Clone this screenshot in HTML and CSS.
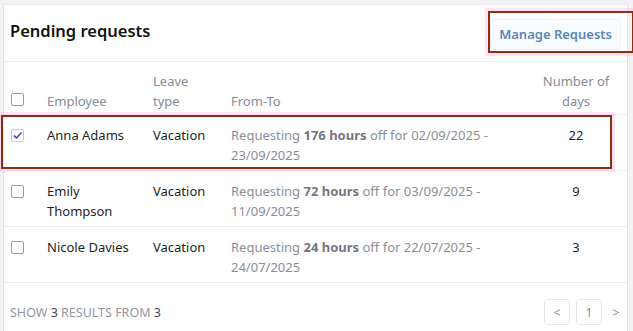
FILE: index.html
```html
<!DOCTYPE html>
<html>
<head>
<meta charset="utf-8">
<link rel="stylesheet" href="styles.css">
</head>
<body>
<div class="card">
  <div class="card-head">
    <h2 class="title">Pending requests</h2>
    <button class="btn-manage">Manage Requests</button>
  </div>
  <table class="req-table">
    <colgroup>
      <col class="c-check"><col class="c-emp"><col class="c-type"><col class="c-range"><col class="c-days">
    </colgroup>
    <thead>
      <tr>
        <th><span class="cb"></span></th>
        <th>Employee</th>
        <th>Leave<br>type</th>
        <th>From-To</th>
        <th class="center">Number of<br>days</th>
      </tr>
    </thead>
    <tbody>
      <tr>
        <td><span class="cb checked"><svg viewBox="0 0 12 12" width="11" height="11"><path d="M2.5 6.5 L5 8.8 L9.8 3.2" fill="none" stroke="#5a4cc2" stroke-width="1.8" stroke-linecap="round" stroke-linejoin="round"/></svg></span></td>
        <td>Anna Adams</td>
        <td>Vacation</td>
        <td class="muted">Requesting <b>176 hours</b> off for 02/09/2025 - 23/09/2025</td>
        <td class="center">22</td>
      </tr>
      <tr>
        <td><span class="cb"></span></td>
        <td>Emily Thompson</td>
        <td>Vacation</td>
        <td class="muted">Requesting <b>72 hours</b> off for 03/09/2025 - 11/09/2025</td>
        <td class="center">9</td>
      </tr>
      <tr>
        <td><span class="cb"></span></td>
        <td>Nicole Davies</td>
        <td>Vacation</td>
        <td class="muted">Requesting <b>24 hours</b> off for 22/07/2025 - 24/07/2025</td>
        <td class="center">3</td>
      </tr>
    </tbody>
  </table>
  <div class="card-foot">
    <div class="summary">SHOW <b>3</b> RESULTS FROM <b>3</b></div>
    <div class="pager">
      <span class="pg pg-box">&lt;</span>
      <span class="pg pg-box">1</span>
      <span class="pg">&gt;</span>
    </div>
  </div>
  <div class="mark mark-btn"></div>
  <div class="mark mark-row"></div>
</div>
</body>
</html>
```
FILE: styles.css
```css
* { box-sizing: border-box; }
html, body { margin: 0; }
body {
  background: #f3f3f6;
  padding: 4px 5px 0 3px;
  font-family: "Noto Sans", "Open Sans", sans-serif;
  font-size: 13px;
  color: #1f1f24;
  height: 331px;
  overflow: hidden;
}
.card {
  position: relative;
  background: #fff;
  border-left: 1px solid #e4e4ea;
  border-right: 1px solid #e4e4ea;
  border-top: 1px solid #ececf0;
  height: 340px;
}
.card-head {
  display: flex;
  align-items: center;
  justify-content: space-between;
  height: 57px;
  padding: 0 6px 0 6px;
  border-bottom: 1px solid #ececf0;
}
.title {
  margin: 0;
  font-size: 16.5px;
  font-weight: 600;
  color: #111;
  position: relative;
  top: -3px;
}
.btn-manage {
  font-family: inherit;
  font-size: 13px;
  font-weight: 600;
  color: #5b86b6;
  background: #f8fcff;
  border: 1px solid #eef0f4;
  border-radius: 4px;
  height: 31px;
  padding: 0 8px;
  position: relative;
  top: 1px;
}
.req-table {
  width: 100%;
  border-collapse: collapse;
  table-layout: fixed;
}
.c-check { width: 36px; }
.c-emp { width: 106px; }
.c-type { width: 78px; }
.c-range { width: 306px; }
.c-days { width: auto; }
th {
  font-weight: 400;
  color: #8a8a98;
  text-align: left;
  vertical-align: bottom;
  line-height: 20px;
  padding: 9px 0 3px 7px;
  border-bottom: 1px solid #ececf0;
}
td {
  vertical-align: top;
  line-height: 20px;
  padding: 10px 0 5px 7px;
  border-bottom: 1px solid #ececf0;
}
th:first-child, td:first-child { padding-left: 7px; }
th:first-child { padding-bottom: 6px; }
td:first-child { padding-top: 9px; }
.center { text-align: center; padding-right: 5px; padding-left: 0; }
.muted { color: #8d8d99; padding-right: 8px; }
.muted b { color: #76767f; font-weight: 700; }
.cb {
  display: inline-flex;
  align-items: center;
  justify-content: center;
  width: 13px;
  height: 13px;
  border: 1px solid #9a9aa2;
  border-radius: 2px;
  vertical-align: middle;
}
.cb.checked { border-color: #c9c9d6; }
.card-foot {
  display: flex;
  align-items: center;
  justify-content: space-between;
  height: 58px;
  padding: 0 3px 0 6px;
}
.summary {
  color: #96969f;
  font-size: 12.5px;
}
.summary b { color: #45454d; font-weight: 400; }
.pager { display: flex; align-items: center; gap: 6px; }
.pg {
  display: inline-flex;
  align-items: center;
  justify-content: center;
  width: 26px;
  height: 26px;
  color: #8a8a95;
  font-size: 12px;
}
.pg-box { border: 1px solid #e6e6ec; border-radius: 3px; }
.pg:last-child { width: 16px; }
.mark {
  position: absolute;
  border: 2px solid #8c2f10;
  box-shadow: 0 0 0 3px rgba(255, 190, 235, 0.45);
  pointer-events: none;
}
.mark-btn { left: 484px; top: 6px; width: 146px; height: 42px; }
.mark-row { left: -3px; top: 110px; width: 611px; height: 54px; }
```
